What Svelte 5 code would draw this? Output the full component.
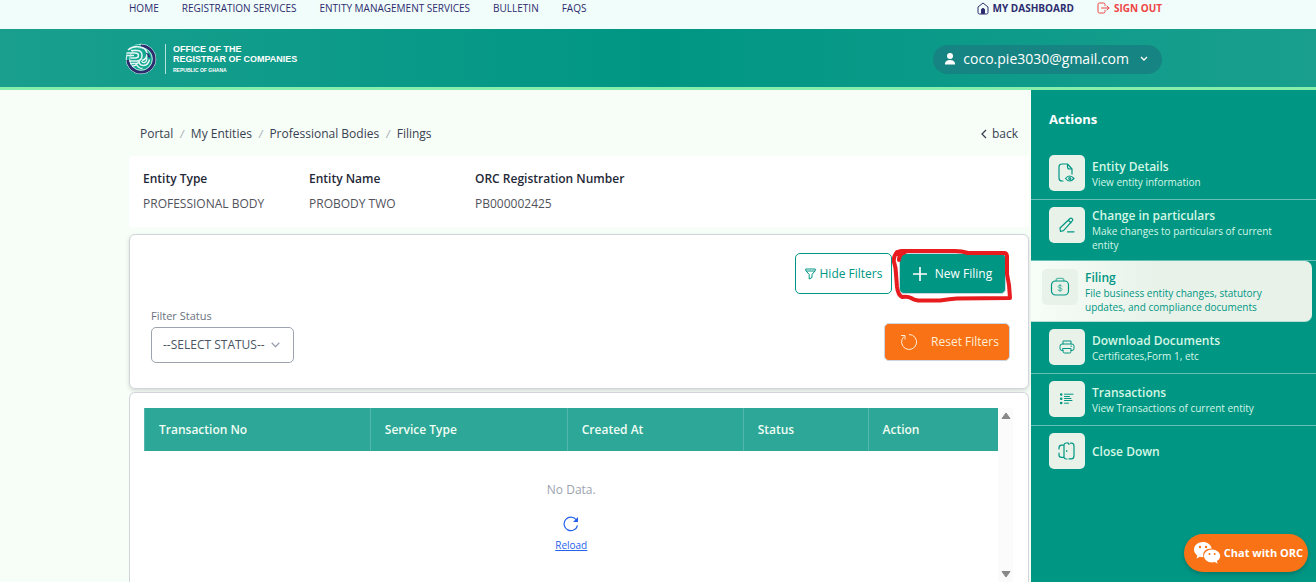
<script>
  const navLinks = ['HOME', 'REGISTRATION SERVICES', 'ENTITY MANAGEMENT SERVICES', 'BULLETIN', 'FAQS'];
  const crumbs = ['Portal', 'My Entities', 'Professional Bodies', 'Filings'];
  const entity = [
    { label: 'Entity Type', value: 'PROFESSIONAL BODY' },
    { label: 'Entity Name', value: 'PROBODY TWO' },
    { label: 'ORC Registration Number', value: 'PB000002425' }
  ];
  const columns = [
    { name: 'Transaction No', share: 226 },
    { name: 'Service Type', share: 197 },
    { name: 'Created At', share: 176 },
    { name: 'Status', share: 125 },
    { name: 'Action', share: 130 }
  ];
  const total = columns.reduce((sum, c) => sum + c.share, 0);
  const actions = [
    { icon: 'details', title: 'Entity Details', text: 'View entity information' },
    { icon: 'edit', title: 'Change in particulars', text: 'Make changes to particulars of current entity' },
    { icon: 'filing', title: 'Filing', text: 'File business entity changes, statutory updates, and compliance documents', active: true },
    { icon: 'print', title: 'Download Documents', text: 'Certificates,Form 1, etc' },
    { icon: 'list', title: 'Transactions', text: 'View Transactions of current entity' },
    { icon: 'door', title: 'Close Down', text: '' }
  ];
</script>

<div class="page">
  <nav class="topbar">
    <div class="links">
      {#each navLinks as link}<a href="#top">{link}</a>{/each}
    </div>
    <div class="account">
      <a class="strong" href="#dashboard">
        <svg width="12" height="13" viewBox="0 0 12 13" fill="none" stroke="currentColor" stroke-linejoin="round"><path d="M1 5 6 1l5 4v5.500q0 1.500-1.500 1.500h-7q-1.500 0-1.500-1.500z" /><path d="M4.500 11.500V8a1.500 1.500 0 0 1 3 0v3.500z" fill="currentColor" /></svg>
        MY DASHBOARD
      </a>
      <a class="strong out" href="#signout">
        <svg width="13" height="13" viewBox="0 0 13 13" fill="none" stroke="currentColor" stroke-linecap="round" stroke-linejoin="round"><path d="M8 3.500V2.500Q8 1 6.500 1H2.500Q1 1 1 2.500v7Q1 11 2.500 11h4Q8 11 8 9.500v-1M4.500 6H12M10 4l2 2-2 2" /></svg>
        SIGN OUT
      </a>
    </div>
  </nav>

  <header class="brandbar">
    <a class="brand" href="#home">
      <svg width="32" height="32" viewBox="0 0 32 32" fill="none">
        <circle cx="16" cy="16" r="14.800" fill="#12a892" stroke="#e5f5f3" />
        <path d="M16 2.800A13.200 13.200 0 1 1 2.800 17" stroke="#2e2b6f" stroke-width="2.800" />
        <circle cx="16" cy="16" r="11.300" stroke="#e5f5f3" stroke-width=".8" />
        <path d="M1.500 10Q4 2 14 1.500L16 5 9 7 2 12z" fill="#12a892" />
        <path d="M3 7Q8 2.500 15 4q6 1 7 6 .5 6-5 7.500" stroke="#e5f5f3" stroke-width="1.500" />
        <path d="M1.500 10H10q3.500 0 3.500 2.500T10 15H5.500M1.500 12.500H9M6 7.500h6q5 0 5 5t-5 5.500H4" stroke="#e5f5f3" stroke-width="1.500" />
        <path d="M5 20.500h6q3 0 3.500-2.500M14 18q0 4.500 4.500 4.500 5-.5 6-6M16.500 18q1 2 3 1.500 3-1 2-5M7 23q4 0 5-2M11.500 21.500q2 4 6 4" stroke="#e5f5f3" stroke-width="1.400" />
        <path d="M20.500 9.500q4.500 1 5 5.500l-2.500-1q-.5-2.500-2.500-4.500z" fill="#2e2b6f" />
      </svg>
      <span class="brandtext">
        <b>OFFICE OF THE</b>
        <b>REGISTRAR OF COMPANIES</b>
        <small>REPUBLIC OF GHANA</small>
      </span>
    </a>
    <button class="user">
      <svg width="12" height="12" viewBox="0 0 12 12" fill="currentColor"><circle cx="6" cy="3" r="3" /><path d="M1 11.500V10q1-3 5-3t5 3v1.500z" /></svg>
      <span>coco.pie3030@gmail.com</span>
      <svg width="8" height="6" viewBox="0 0 8 6" fill="none" stroke="currentColor" stroke-width="1.400"><path d="m1 1 3 3 3-3" /></svg>
    </button>
  </header>

  <div class="body">
    <main>
      <div class="crumbrow">
        <nav class="crumbs" aria-label="Breadcrumb">
          {#each crumbs as crumb, i}
            {#if i > 0}<i>/</i>{/if}<a href="#crumb">{crumb}</a>
          {/each}
        </nav>
        <a class="back" href="#back">
          <svg width="6" height="10" viewBox="0 0 6 10" fill="none" stroke="currentColor" stroke-width="1.300"><path d="M5 1 1 5l4 4" /></svg>
          back
        </a>
      </div>

      <dl class="entity">
        {#each entity as item}
          <div><dt>{item.label}</dt><dd>{item.value}</dd></div>
        {/each}
      </dl>

      <section class="card filters">
        <div class="tools">
          <button class="btn hide">
            <svg width="11" height="12" viewBox="0 0 11 12" fill="none" stroke="currentColor"><path d="M.7 1h9.600v1.500L7 6.500v3L4.200 11V6.500L.7 2.500zM1 3h9" /></svg>
            Hide Filters
          </button>
          <div class="marked">
            <button class="btn new">
              <svg width="14" height="14" viewBox="0 0 14 14" fill="none" stroke="currentColor" stroke-width="1.600"><path d="M7 0v14M0 7h14" /></svg>
              New Filing
            </button>
            <svg class="scribble" viewBox="0 0 122 58" fill="none" stroke="#e81c1f" stroke-width="4" stroke-linecap="round" stroke-linejoin="round" aria-hidden="true"><path d="M7 13Q7 7 13 5M5 5Q1 10 2 15 4 21 4 27L5 40Q6 48 10 50q6-1 9 1 3 2 7 2.500h22q10-1.500 17-2L118 51 117 38 115 27V10q0-4-3-4H76q-6-2-13-2H10Q6 4 5 7" /></svg>
          </div>
        </div>
        <div class="filterrow">
          <div class="field">
            <label for="status">Filter Status</label>
            <div class="selectbox">
              <select id="status"><option>--SELECT STATUS--</option></select>
              <svg width="9" height="6" viewBox="0 0 9 6" fill="none" stroke="currentColor" stroke-width="1.300"><path d="m.7.7 3.800 4 3.800-4" /></svg>
            </div>
          </div>
          <button class="btn reset">
            <svg width="18" height="18" viewBox="0 0 18 18" fill="none" stroke="currentColor"><path d="M9 1.500A7.500 7.500 0 1 1 4 3.500M1 2.500h4v4" /></svg>
            Reset Filters
          </button>
        </div>
      </section>

      <section class="card results">
        <div class="tablewrap">
          <table>
            <colgroup>{#each columns as c}<col style="width: {(c.share / total) * 100}%" />{/each}</colgroup>
            <thead><tr>{#each columns as c}<th scope="col">{c.name}</th>{/each}</tr></thead>
            <tbody><tr><td colspan="5">
              <p>No Data.</p>
              <button class="reload">
                <svg width="16" height="16" viewBox="0 0 16 16" fill="none" stroke="currentColor" stroke-width="1.200"><path d="M14.500 9.500A6.800 6.800 0 1 1 13.500 4" /><path d="M15 1v5h-5z" fill="currentColor" stroke="none" /></svg>
                Reload
              </button>
            </td></tr></tbody>
          </table>
        </div>
        <div class="rail" aria-hidden="true">
          <svg width="10" height="8" viewBox="0 0 10 8"><path d="M5 1 9 6.500H1z" fill="#888" stroke="#888" stroke-linejoin="round" /></svg>
          <svg width="10" height="8" viewBox="0 0 10 8"><path d="M5 7 9 1.500H1z" fill="#888" stroke="#888" stroke-linejoin="round" /></svg>
        </div>
      </section>
    </main>

    <aside>
      <h2>Actions</h2>
      {#each actions as a}
        <a class="action" class:active={a.active} href="#{a.icon}">
          <span class="tile">
            <svg width="20" height="20" viewBox="0 0 20 20" fill="none" stroke="currentColor" stroke-width="1.200" stroke-linecap="round" stroke-linejoin="round">
              {#if a.icon === 'details'}
                <path d="M6 18H5q-3 0-3-3V4q0-3 3-3h5.500L15 6v5M10.500 1v3q0 2 2 2H15" />
                <path d="M8.500 15.500q4-5 8.500 0-4.500 5-8.500 0z" /><circle cx="12.750" cy="15.500" r="1" />
              {:else if a.icon === 'edit'}
                <path d="m3 13 .5 3.500 3-.8 9-10q.8-1-.3-2t-2.200-.2zM11.500 5.500l2.500 2.300M10.500 16.800H17" />
              {:else if a.icon === 'filing'}
                <rect x="1.500" y="4" width="17" height="14" rx="4" /><path d="M6 3.800q0-2.500 2-2.500h4q2 0 2 2.500" opacity=".6" />
                <path d="M12 9.200q-.5-1-2-1t-2 1.200q0 1.200 2 1.500t2 1.600q0 1.300-2 1.300t-2-1.200M10 7.500v7" stroke-width="1" opacity=".6" />
              {:else if a.icon === 'print'}
                <path d="M6 7V4h8v3M6 13.500H5q-2 0-2-2V9.300Q3 7 5 7h10q2 0 2 2.300v2.200q0 2-2 2h-1M6 11.500h8v3q0 1.500-1.500 1.500h-5Q6 16 6 14.500zM14 9.200h.5" stroke-width="1" />
              {:else if a.icon === 'list'}
                <path d="M7.500 5.200H16M7.500 7.500h5M7.500 9.500h6.500M7.500 11.500H15M7.500 14.200h4" stroke-width="1" />
                <path d="M4.200 5.500v0M4.200 9.800v0M4.200 14v0" stroke-width="2.600" />
              {:else}
                <path d="M10 2H9Q7 2.200 7 4v12q0 1.800 2 2h1M10 2q2-.3 2 1.500M7 4.200H4.500Q2 4.500 2 7v1M2 12v2q0 2.300 2.500 2.300H7M13.500 2.200h1q2.500 0 2.500 3v9.600q0 3-2.500 3h-2.500M9.700 9.500v1" />
              {/if}
            </svg>
          </span>
          <span class="words"><strong>{a.title}</strong>{#if a.text}<span>{a.text}</span>{/if}</span>
        </a>
      {/each}
    </aside>
  </div>

  <button class="chat">
    <svg width="28" height="24" viewBox="0 0 28 24">
      <path d="M10 1C5 1 1 4.200 1 8.500c0 2.500 1.300 4.500 3.300 5.900L3.500 17.500l3.300-1.700q1.600.5 3.700.4C9 10.500 13.500 7.300 18.700 7.500 18 3.500 14.200 1 10 1z" fill="#fff" />
      <path d="M19 8.500c-4.500 0-8 3-8 6.500s3.500 6.500 8 6.500q1.500 0 2.700-.4l3 1.600-.8-2.600c2-1.200 3.300-3 3.300-5.100 0-3.500-3.700-6.500-8.200-6.500z" fill="#fff" />
      <g fill="#f97316"><circle cx="7" cy="6" r="1.200" /><circle cx="13" cy="6" r="1.200" /><circle cx="16.500" cy="13" r="1" /><circle cx="21.700" cy="13" r="1" /></g>
    </svg>
    Chat with ORC
  </button>
</div>

<style>
  :global(body) { margin: 0; }
  .page { --teal: #009684; height: 100vh; display: flex; flex-direction: column; overflow: hidden; background: #f7fdf7; color: #374151; font: 12px/18px "Segoe UI", "Open Sans", "Noto Sans", sans-serif; }
  .page :is(button, select) { font: inherit; }
  a { color: inherit; text-decoration: none; }
  button { cursor: pointer; }
  svg { display: block; flex: none; }

  .topbar { display: flex; justify-content: space-between; height: 29px; padding: 0 154px 0 129px; background: #f0fdfa; color: #2e2b6f; font-size: 10px; line-height: 16px; font-weight: 500; }
  .links, .account { display: flex; gap: 23px; }
  .strong { display: flex; align-items: center; gap: 4px; height: 16px; font-weight: 700; }
  .out { color: #ef4444; }

  .brandbar { display: flex; align-items: center; justify-content: space-between; padding: 14px 154px 12px 125px; border-bottom: 3px solid #86efac; background: linear-gradient(90deg, #1a9f8e, var(--teal) 50%, #1a9f8e); color: #fff; }
  .brand { display: flex; align-items: center; gap: 8px; }
  .brandtext { display: flex; flex-direction: column; padding-left: 7px; border-left: 1px solid #b7e2dc; font: 9px/10px "Liberation Sans", Arial, sans-serif; }
  .brandtext small { margin-top: 2px; font-size: 5px; line-height: 8px; font-weight: 700; }
  .user { display: flex; align-items: center; gap: 7px; height: 29px; padding: 0 14px 0 11px; border: 0; border-radius: 15px; background: #168482; color: #fff; }
  .page .user { font-size: 14px; }
  .user span { margin-right: 4px; }

  .body { display: flex; flex: 1; min-height: 0; }
  main { display: flex; flex: 1; flex-direction: column; min-width: 0; padding: 35px 2px 0 129px; }
  .crumbrow { display: flex; justify-content: space-between; padding: 0 11px; margin-bottom: 13px; }
  .crumbs { display: flex; gap: 7px; }
  .crumbs i { color: #9ca3af; font-size: 10px; }
  .back { display: flex; align-items: center; gap: 5px; }

  .entity { display: grid; grid-template-columns: repeat(3, 166px) 1fr; margin: 0 0 7px; padding: 14px; border-radius: 4px; background: #fff; white-space: nowrap; }
  .entity div { display: grid; gap: 7px; }
  .entity dt { color: #1f2937; font-weight: 600; }
  .entity dd { margin: 0; color: #52525b; }

  .card { box-sizing: border-box; border: 1px solid #d1d5db; border-radius: 6px; background: #fff; }
  .filters { margin-bottom: 3px; padding: 18px 18px 25px 21px; box-shadow: 0 2px 4px #0002; }
  .tools { display: flex; justify-content: flex-end; gap: 7px; margin-bottom: 13px; padding-right: 4px; }
  .btn { display: flex; align-items: center; justify-content: center; border: 1px solid #cbd5e1; border-radius: 5px; color: #fff; }
  .hide { gap: 4px; width: 97px; height: 41px; padding: 0; border-color: var(--teal); background: #fff; color: var(--teal); }
  .marked { position: relative; }
  .new { gap: 8px; width: 107px; height: 41px; padding: 0; background: var(--teal); }
  .scribble { position: absolute; left: -7px; top: -6px; width: 122px; height: 58px; pointer-events: none; }
  .filterrow { display: flex; align-items: flex-start; justify-content: space-between; }
  .field label { display: block; margin-bottom: 2px; color: #6b7280; font-size: 11px; }
  .selectbox { display: flex; align-items: center; position: relative; color: #9ca3af; }
  .selectbox select { appearance: none; width: 143px; height: 36px; padding: 0 11px; border: 1px solid #9ca3af; border-radius: 5px; background: #fff; color: #4b5563; }
  .selectbox svg { position: absolute; right: 14px; pointer-events: none; }
  .reset { gap: 13px; width: 126px; height: 38px; margin-top: 16px; padding: 0 0 0 5px; background: #f97316; color: #ffedd5; }

  .results { display: flex; flex: 1; min-height: 0; padding: 15px 15px 0 14px; border-bottom: 0; border-radius: 6px 6px 0 0; }
  .tablewrap { flex: 1; min-width: 0; }
  table { width: 100%; border-collapse: collapse; table-layout: fixed; }
  th { height: 43px; padding: 0 14px; border-left: 1px solid #55b7ab; background: #2da797; color: #f0fdf4; font-weight: 600; text-align: left; }
  td { padding: 30px 0 0; text-align: center; color: #9ca3af; }
  td p { margin: 0 0 17px; }
  .page .reload { display: inline-flex; flex-direction: column; align-items: center; gap: 4px; padding: 0; border: 0; background: none; color: #2563eb; font-size: 10px; text-decoration: underline; }
  .rail { display: flex; flex-direction: column; align-items: center; justify-content: space-between; width: 15px; padding: 4px 0; background: #fbfbfb; }

  aside { flex: none; width: 285px; background: var(--teal); color: #d5f7e4; }
  h2 { margin: 0; padding: 20px 18px; color: #fff; font-size: 13px; line-height: 18px; font-weight: 700; }
  .action { display: flex; gap: 7px; padding: 7px 18px 8px; border-bottom: 1px solid #66c0b5; }
  .action:last-child { border: 0; }
  .tile { display: grid; flex: none; place-items: center; width: 36px; height: 36px; border-radius: 5px; background: #e8f2e9; color: var(--teal); }
  .words { display: flex; flex-direction: column; justify-content: center; font-size: 10px; line-height: 14px; }
  .words strong { font-size: 12px; line-height: 17px; font-weight: 600; }
  .active { margin-right: 4px; padding: 8px 11px 7px; border-bottom-color: #b8ddd2; border-radius: 0 7px 7px 0; background: linear-gradient(90deg, #f7fdf7, #e8f2e9 45%); color: var(--teal); }

  .chat { position: absolute; right: 8px; bottom: 10px; display: flex; align-items: center; gap: 3px; height: 38px; padding: 0 5px 0 9px; border: 0; border-radius: 19px; background: #f97316; color: #fff; box-shadow: 0 2px 4px #0003; }
  .page .chat { font-size: 11px; font-weight: 700; }
</style>
